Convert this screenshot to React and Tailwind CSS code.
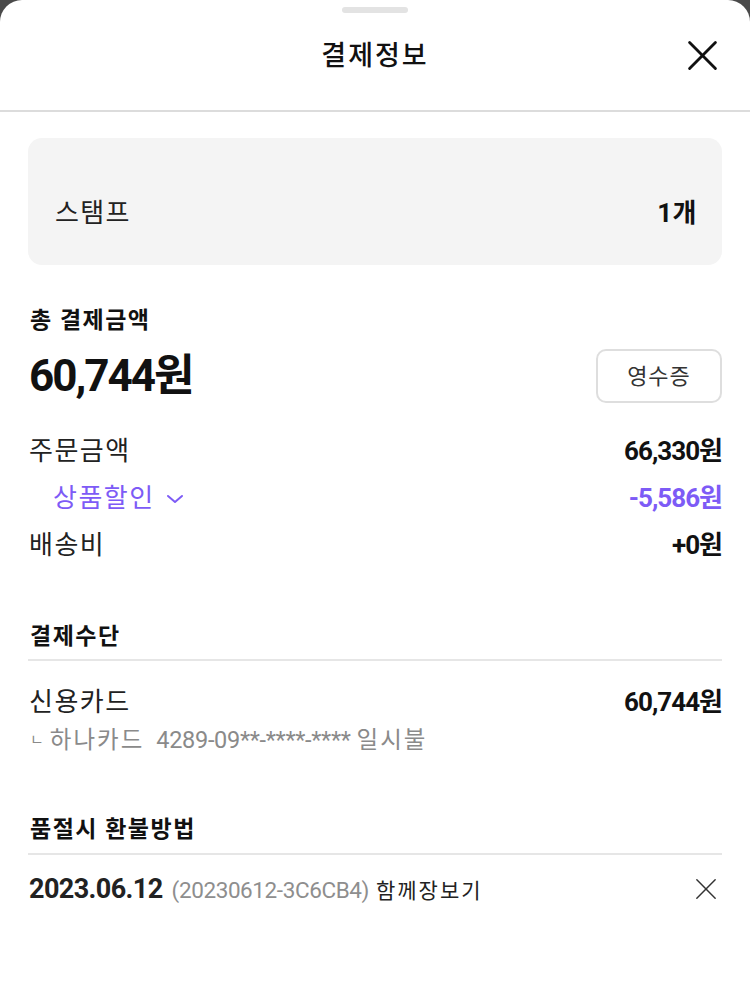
const font = { fontFamily: "Roboto, 'Noto Sans CJK KR', sans-serif" };

const CloseIcon = ({ size, stroke, color }) => (
  <svg width={size} height={size} viewBox="0 0 24 24" fill="none">
    <path d="M2 2L22 22M22 2L2 22" stroke={color} strokeWidth={stroke} strokeLinecap="round" />
  </svg>
);

const Chevron = () => (
  <svg width="18" height="10" viewBox="0 0 18 10" fill="none">
    <path d="M2 2L9 8L16 2" stroke="currentColor" strokeWidth="2" strokeLinecap="round" strokeLinejoin="round" />
  </svg>
);

const priceRows = [
  { label: "주문금액", value: "66,330원" },
  { label: "상품할인", value: "-5,586원", accent: true },
  { label: "배송비", value: "+0원" },
];

const App = () => {
  return (
    <div className="min-h-[990px] bg-[#4a4a4a]" style={font}>
      <div className="min-h-[990px] bg-white rounded-t-[22px] text-[#111]">
        {/* Header */}
        <div className="pt-[7px] pb-[11px] border-b-2 border-[#dcdcdc]">
          <div className="mx-auto h-[6px] w-[66px] rounded-full bg-[#e3e3e3]" />
          <div className="relative h-[86px] flex items-center justify-center">
            <h1 className="text-[27px] font-medium tracking-[2px]">결제정보</h1>
            <button className="absolute right-[32px] top-[27px]">
              <CloseIcon size={31} stroke={2.2} color="#111" />
            </button>
          </div>
        </div>

        <div className="px-[28px] pt-[26px]">
          {/* Stamp */}
          <div className="h-[127px] rounded-[14px] bg-[#f4f4f4] pt-[24px] pl-[27px] pr-[25px] flex items-center justify-between">
            <span className="text-[26px] tracking-[1.3px] text-[#222]">스탬프</span>
            <span className="text-[26px] font-bold tracking-[0.5px]">1개</span>
          </div>

          {/* Total */}
          <div className="mt-[41px] text-[23px] leading-[30px] font-semibold tracking-[1.5px] pl-[2px]">총 결제금액</div>
          <div className="mt-[13px] h-[54px] flex items-center justify-between">
            <span className="text-[44px] font-bold tracking-[-2px] pl-[1px]">60,744원</span>
            <button className="h-[54px] w-[126px] rounded-[10px] border-2 border-[#dedede] text-[22px] tracking-[1px] text-[#333]">
              영수증
            </button>
          </div>

          <div className="mt-[25px]">
            {priceRows.map((row) => (
              <div key={row.label} className="h-[47px] flex items-center justify-between">
                {row.accent ? (
                  <span className="pl-[25px] flex items-center gap-[11px] text-[26px] tracking-[1.5px] text-[#7d5bf6]">
                    {row.label}
                    <Chevron />
                  </span>
                ) : (
                  <span className="pl-[1px] text-[26px] tracking-[1.5px] text-[#222]">{row.label}</span>
                )}
                <span
                  className={
                    row.accent
                      ? "text-[26px] font-bold tracking-[-1px] text-[#7d5bf6]"
                      : "text-[26px] font-bold tracking-[-1px]"
                  }
                >
                  {row.value}
                </span>
              </div>
            ))}
          </div>

          {/* Payment method */}
          <div className="mt-[53px] pb-[7px] border-b-2 border-[#e6e6e6]">
            <div className="text-[23px] leading-[30px] font-semibold tracking-[1.5px] pl-[2px]">결제수단</div>
          </div>
          <div className="mt-[24px] h-[34px] flex items-center justify-between">
            <span className="pl-[1px] text-[26px] tracking-[1.5px] text-[#222]">신용카드</span>
            <span className="text-[26px] font-bold tracking-[-1px]">60,744원</span>
          </div>
          <div className="mt-[6px] leading-[30px] text-[23.5px] text-[#8a8a8a] flex items-center pl-[2px]">
            <span className="text-[15px] mr-[6px]">ㄴ</span>
            <span className="tracking-[2px]">하나카드</span>
            <span className="ml-[12px] tracking-[-0.3px]">4289-09**-****-****</span>
            <span className="ml-[6px] tracking-[2px]">일시불</span>
          </div>

          {/* Refund */}
          <div className="mt-[60px] pb-[8px] border-b-2 border-[#e6e6e6]">
            <div className="text-[23px] leading-[30px] font-semibold tracking-[1.5px] pl-[2px]">품절시 환불방법</div>
          </div>
          <div className="mt-[17px] h-[34px] flex items-center justify-between">
            <div className="flex items-baseline pl-[1px]">
              <span className="text-[27px] font-bold tracking-[-0.6px] text-[#222]">2023.06.12</span>
              <span className="ml-[9px] text-[22.5px] tracking-[-0.4px] text-[#8e8e8e]">(20230612-3C6CB4)</span>
              <span className="ml-[7px] text-[21px] tracking-[2px] text-[#222]">함께장보기</span>
            </div>
            <button className="mr-[5px]">
              <CloseIcon size={22} stroke={1.6} color="#333" />
            </button>
          </div>
        </div>
      </div>
    </div>
  );
};

export default App;
